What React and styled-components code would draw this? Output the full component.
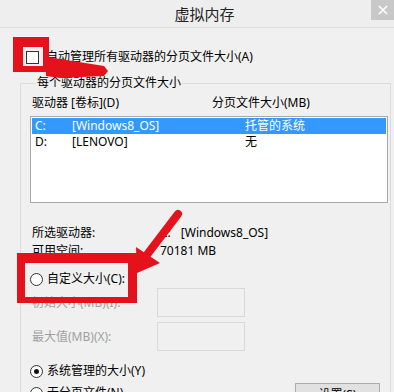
import React from 'react'
import styled, { createGlobalStyle } from 'styled-components'

const GlobalStyle = createGlobalStyle`
  body {
    margin: 0;
    background: #f0f0f0;
    font-family: "Noto Sans", "Noto Sans CJK SC", sans-serif;
    font-size: 12px;
    color: #000;
  }
`

const Window = styled.div`
  position: relative;
  width: 394px;
  height: 392px;
  overflow: hidden;
  background: #f0f0f0;
`

const TitleBar = styled.div`
  display: flex;
  align-items: flex-start;
  height: 28px;
  box-sizing: border-box;
  background: #eeeeee;
  border-bottom: 1px solid #dedede;
`

const Title = styled.div`
  flex: 1;
  text-align: center;
  padding-left: 38px;
  font-size: 15px;
  line-height: 29px;
  color: #222;
`

const CloseButton = styled.div`
  width: 23px;
  height: 20px;
  background: #c8c8c8;
  display: flex;
  align-items: center;
  justify-content: center;
`

const Content = styled.div`
  padding-left: 26px;
`

const CheckRow = styled.div`
  display: flex;
  align-items: center;
  gap: 7px;
  height: 16px;
  margin-top: 21px;
  line-height: 16px;
`

const CheckBox = styled.span`
  width: 13px;
  height: 13px;
  box-sizing: border-box;
  border: 1px solid #333;
  background: #fff;
`

const GroupBox = styled.fieldset`
  margin: 10px 0 0 -6px;
  padding: 0 0 0 9px;
  width: 371px;
  height: 400px;
  box-sizing: border-box;
  border: 1px solid #dcdcdc;
  min-width: 0;
`

const Legend = styled.legend`
  margin-left: 6px;
  padding: 0 1px;
  line-height: 16px;
`

const Header = styled.div`
  display: grid;
  grid-template-columns: 180px 1fr;
  padding-left: 2px;
  margin-top: 4px;
  line-height: 16px;
`

const ListBox = styled.div`
  margin-top: 5px;
  width: 358px;
  height: 87px;
  box-sizing: border-box;
  border: 1px solid #a8a8a8;
  background: #fff;
  padding: 1px;
`

const ListRow = styled.div`
  display: grid;
  grid-template-columns: 37px 173px 1fr;
  padding-left: 3px;
  height: 16px;
  line-height: 16px;
  background: ${p => (p.$selected ? '#3399ff' : 'transparent')};
  color: ${p => (p.$selected ? '#fff' : '#000')};
`

const Info = styled.div`
  display: grid;
  grid-template-columns: 128px 1fr;
  margin-top: 21px;
  padding-left: 2px;
  line-height: 18px;
`

const Gap = styled.span`
  margin-left: 10px;
`

const RadioRow = styled.div`
  display: flex;
  align-items: center;
  gap: 4px;
  height: 16px;
  line-height: 16px;
  margin-top: ${p => p.$top}px;
`

const Radio = styled.span`
  position: relative;
  width: 13px;
  height: 13px;
  box-sizing: border-box;
  border: 1px solid #333;
  border-radius: 50%;
  background: #fff;
  display: flex;
  align-items: center;
  justify-content: center;

  &::after {
    content: '';
    display: ${p => (p.$checked ? 'block' : 'none')};
    width: 5px;
    height: 5px;
    border-radius: 50%;
    background: #111;
  }
`

const SizeGrid = styled.div`
  display: grid;
  grid-template-columns: 125px 88px;
  row-gap: 5px;
  align-items: center;
  margin-top: 1px;
  padding-left: 2px;
`

const DimLabel = styled.span`
  color: #a0a0a0;
  line-height: 16px;
`

const SizeInput = styled.div`
  height: 29px;
  box-sizing: border-box;
  border: 1px solid #d9d9d9;
  background: #f0f0f0;
`

const BottomRow = styled.div`
  display: flex;
  justify-content: space-between;
  align-items: flex-start;
  margin-top: 4px;
  padding-right: 10px;
`

const Button = styled.div`
  width: 85px;
  height: 24px;
  box-sizing: border-box;
  border: 1px solid #adadad;
  background: #e1e1e1;
  text-align: center;
  line-height: 22px;
`

const RedFrame = styled.div`
  position: absolute;
  left: ${p => p.$x}px;
  top: ${p => p.$y}px;
  width: ${p => p.$w}px;
  height: ${p => p.$h}px;
  box-sizing: border-box;
  border-style: solid;
  border-color: #e5121b;
  border-width: ${p => p.$bw};
`

const Arrows = styled.svg`
  position: absolute;
  left: 0;
  top: 0;
  pointer-events: none;
`

const drives = [
  { letter: 'C:', label: '[Windows8_OS]', size: '托管的系统', selected: true },
  { letter: 'D:', label: '[LENOVO]', size: '无' },
]

export default function App() {
  return (
    <>
      <GlobalStyle />
      <Window>
        <TitleBar>
          <Title>虚拟内存</Title>
          <CloseButton>
            <svg width="10" height="10" viewBox="0 0 10 10">
              <path d="M1 1L9 9M9 1L1 9" stroke="#fff" strokeWidth="1.6" />
            </svg>
          </CloseButton>
        </TitleBar>
        <Content>
          <CheckRow>
            <CheckBox />
            <span>自动管理所有驱动器的分页文件大小(A)</span>
          </CheckRow>
          <GroupBox>
            <Legend>每个驱动器的分页文件大小</Legend>
            <Header>
              <span>驱动器 [卷标](D)</span>
              <span>分页文件大小(MB)</span>
            </Header>
            <ListBox>
              {drives.map(d => (
                <ListRow key={d.letter} $selected={d.selected}>
                  <span>{d.letter}</span>
                  <span>{d.label}</span>
                  <span>{d.size}</span>
                </ListRow>
              ))}
            </ListBox>
            <Info>
              <span>所选驱动器:</span>
              <span>
                C:<Gap>[Windows8_OS]</Gap>
              </span>
              <span>可用空间:</span>
              <span>70181 MB</span>
            </Info>
            <RadioRow $top={11}>
              <Radio />
              <span>自定义大小(C):</span>
            </RadioRow>
            <SizeGrid>
              <DimLabel>初始大小(MB)(I):</DimLabel>
              <SizeInput />
              <DimLabel>最大值(MB)(X):</DimLabel>
              <SizeInput />
            </SizeGrid>
            <RadioRow $top={12}>
              <Radio $checked />
              <span>系统管理的大小(Y)</span>
            </RadioRow>
            <BottomRow>
              <RadioRow $top={2}>
                <Radio />
                <span>无分页文件(N)</span>
              </RadioRow>
              <Button>设置(S)</Button>
            </BottomRow>
          </GroupBox>
        </Content>

        <RedFrame $x={13} $y={37} $w={36} $h={35} $bw="10px 6px 6px 10px" />
        <RedFrame $x={17} $y={253} $w={120} $h={50} $bw="10px 9px 6px 8px" />
        <Arrows width="394" height="392" viewBox="0 0 394 392">
          <polygon
            points="46,57 60,59 104,66 108,71 104,76 60,78 46,76"
            fill="#e5121b"
          />
          <line
            x1="178"
            y1="214"
            x2="146"
            y2="256"
            stroke="#e5121b"
            strokeWidth="8"
            strokeLinecap="round"
          />
          <polygon points="136,247 160,263 137,273" fill="#e5121b" />
        </Arrows>
      </Window>
    </>
  )
}
